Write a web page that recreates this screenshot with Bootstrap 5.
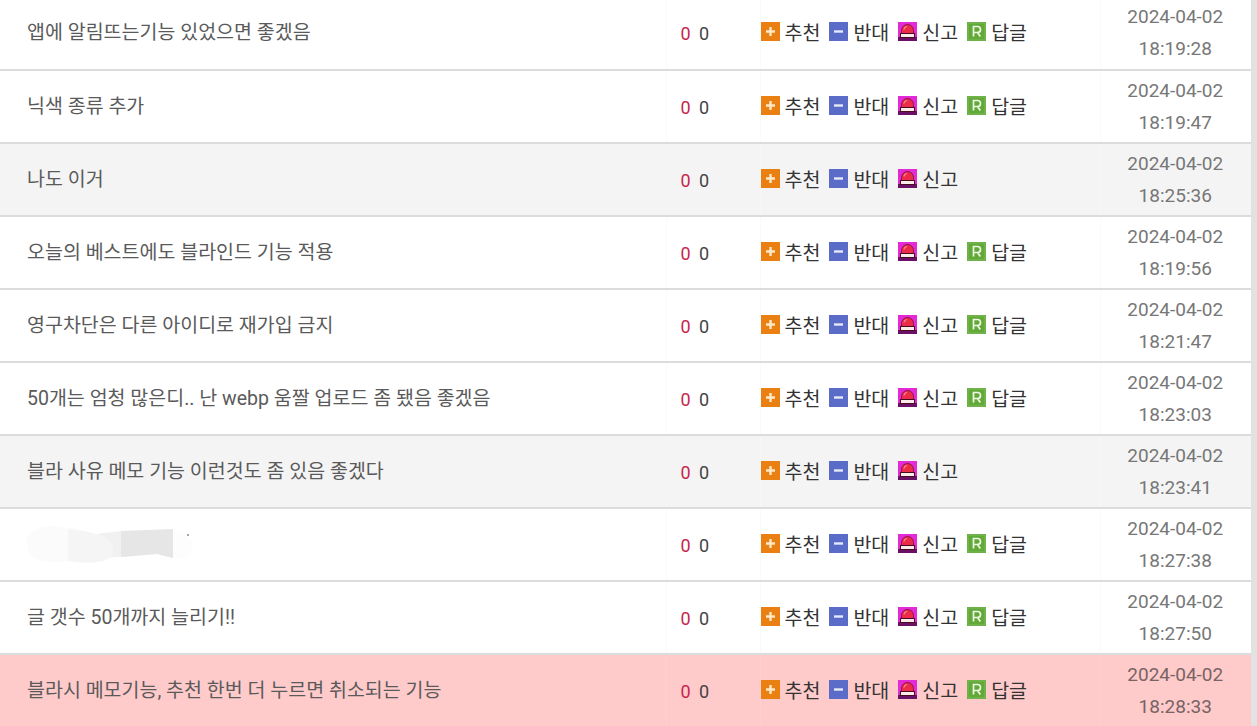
<!DOCTYPE html>
<html lang="ko">
<head>
<meta charset="UTF-8">
<title>건의 게시판</title>
<link href="https://cdn.jsdelivr.net/npm/bootstrap@5.3.3/dist/css/bootstrap.min.css" rel="stylesheet">
<style>
    html, body { height: 726px; overflow: hidden; background: #e2e2e2; }
    body { font-family: Roboto, "Noto Sans CJK KR", sans-serif; }
    #board { width: 1251px; margin-top: -3px; background: #fff; }
    #board table { width: 100%; table-layout: fixed; border-collapse: collapse; }
    #board td { height: 73px; padding: 0; vertical-align: middle; border-bottom: 2px solid #dcdcdc; border-left: 1px solid #fafafa; }
    #board td:first-child { border-left: 0; }
    .row-gray td { background: #f4f4f4; border-left-color: #f6f6f6 !important; }
    .row-pink td { background: #ffcaca; border-bottom: 0 !important; border-left-color: #ffcfcf !important; }
    .c-title { width: 666px; padding-left: 27px !important; font-size: 19.5px; color: #5a5a5a; }
    .c-count { width: 94px; padding-left: 14px !important; padding-top: 1px !important; font-size: 18px; color: #444; }
    .c-count .up { color: #c7254e; margin-right: 4px; }
    .c-acts { width: 340px; padding-top: 2px !important; }
    .c-date { font-size: 19px; line-height: 32px; color: #777; text-align: center; padding-right: 1px !important; }
    .row-pink .c-date { color: #776464; }
    .act { display: inline-flex; align-items: center; font-size: 19.5px; color: #333; margin-right: 9px; }
    .act svg { width: 19px; height: 19px; margin-right: 5px; margin-top: -5px; flex: none; }
    .smudge { display: block; width: 166px; height: 42px; }
</style>
</head>
<body>
<div id="board"><table><tbody id="rows"></tbody></table></div>

<svg width="0" height="0" class="d-none">
    <symbol id="ico-up" viewBox="0 0 19 19"><rect width="19" height="19" fill="#ea7f12"/><path d="M9.500 5v9M5 9.500h9" stroke="#ffe9c9" stroke-width="2.400"/></symbol>
    <symbol id="ico-down" viewBox="0 0 19 19"><rect width="19" height="19" fill="#5a6bc8"/><path d="M5 9.500h9" stroke="#e6eafa" stroke-width="2.400"/></symbol>
    <symbol id="ico-siren" viewBox="0 0 19 19"><rect width="19" height="19" fill="#e42ad6"/><rect y="15" width="19" height="4" fill="#6a1066"/><path d="M3.500 12V8.500a6 6 0 0 1 12 0V12z" fill="#ea2c48" stroke="#6a0a2a" stroke-width=".7"/><path d="M6 7.500a3.500 3.500 0 0 1 3-3" fill="none" stroke="#ff8a96" stroke-width="1.200"/><rect x="2.500" y="11.500" width="14" height="4" fill="#fbeaea" stroke="#4a0a20"/></symbol>
    <symbol id="ico-reply" viewBox="0 0 19 19"><rect width="19" height="19" fill="#62a93a"/><rect x="1" y="1" width="17" height="17" fill="none" stroke="#7dbb58"/><path d="M6.500 14.500v-10h4a3 3 0 0 1 0 6h-4m4 0 2.800 4" fill="none" stroke="#eef7e4" stroke-width="1.700"/></symbol>
</svg>

<script>
    const posts = [
        ['앱에 알림뜨는기능 있었으면 좋겠음', '18:19:28', ''],
        ['닉색 종류 추가', '18:19:47', ''],
        ['나도 이거', '18:25:36', 'row-gray'],
        ['오늘의 베스트에도 블라인드 기능 적용', '18:19:56', ''],
        ['영구차단은 다른 아이디로 재가입 금지', '18:21:47', ''],
        ['50개는 엄청 많은디.. 난 webp 움짤 업로드 좀 됐음 좋겠음', '18:23:03', ''],
        ['블라 사유 메모 기능 이런것도 좀 있음 좋겠다', '18:23:41', 'row-gray'],
        [null, '18:27:38', ''],
        ['글 갯수 50개까지 늘리기!!', '18:27:50', ''],
        ['블라시 메모기능, 추천 한번 더 누르면 취소되는 기능', '18:28:33', 'row-pink']
    ];

    // 가려진 제목 자리
    const smudge = '<svg class="smudge" viewBox="0 0 166 42"><path d="M146 8C155 8 166 12 166 22S156 36 146 34Z" fill="#fdfdfd"/><path d="M68 10 94 7 146 6V34L130 30 94 33 68 34Z" fill="#f1f1f1"/><path d="M94 7 146 5V34L130 30 94 33Z" fill="#e6e6e6"/><path d="M0 18C0 6 14 1 34 3 56 5 86 10 86 26 86 40 62 40 44 37 24 38 0 42 0 18Z" fill="#fbfbfb"/><path d="M41 5C60 7 86 12 86 26 86 40 62 40 41 37Z" fill="#f5f5f5"/><circle cx="161" cy="11" r="1" fill="#888"/></svg>';

    function act(icon, label) {
        return `<span class="act"><svg><use href="#${icon}"/></svg>${label}</span>`;
    }

    document.getElementById('rows').innerHTML = posts.map(function (p) {
        // 회색 줄은 답글 버튼이 없음
        const reply = p[2] === 'row-gray' ? '' : act('ico-reply', '답글');
        return `<tr class="${p[2]}">
            <td class="c-title">${p[0] === null ? smudge : p[0]}</td>
            <td class="c-count"><span class="up">0</span> 0</td>
            <td class="c-acts">${act('ico-up', '추천')}${act('ico-down', '반대')}${act('ico-siren', '신고')}${reply}</td>
            <td class="c-date">2024-04-02<br>${p[1]}</td>
        </tr>`;
    }).join('');
</script>
<script src="https://cdn.jsdelivr.net/npm/bootstrap@5.3.3/dist/js/bootstrap.bundle.min.js"></script>
</body>
</html>
